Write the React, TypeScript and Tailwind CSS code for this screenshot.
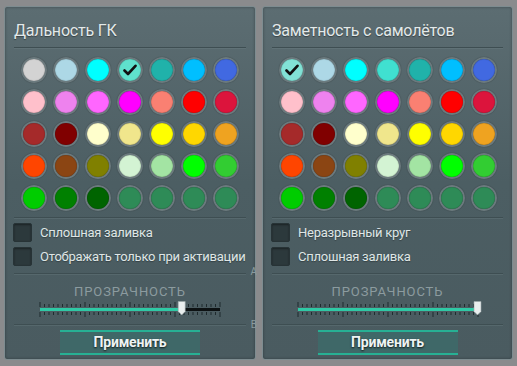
import React from "react";

const FONT = { fontFamily: "Roboto, 'Noto Sans', sans-serif" };

const COLORS = [
  ["#d3d3d3", "#add8e6", "#00ffff", "#40e0d0", "#20b2aa", "#00bfff", "#4169e1"],
  ["#ffc0cb", "#ee82ee", "#ff66ff", "#ff00ff", "#fa8072", "#ff0000", "#dc143c"],
  ["#a52a2a", "#800000", "#ffffcc", "#f0e68c", "#ffff00", "#ffd700", "#efa320"],
  ["#ff4500", "#8b4513", "#808000", "#d3f3d3", "#a3e4a3", "#00ff00", "#32cd32"],
  ["#00cc00", "#008000", "#006400", "#2e8b57", "#2e8b57", "#2e8b57", "#2e8b57"],
];

const Check = () => (
  <svg width="14" height="12" viewBox="0 0 14 12">
    <path d="M1.5 6.5 L5 10 L12.5 1.8" fill="none" stroke="#111" strokeWidth="2.6" strokeLinecap="round" strokeLinejoin="round" />
  </svg>
);

const Swatch = ({ color, selected }: { color: string; selected?: boolean }) => (
  <div className="w-[26px] h-[26px] rounded-full bg-[#6b7a7e] p-[2px] shadow-[0_0_1px_rgba(0,0,0,0.5)]">
    <div
      className="w-full h-full rounded-full flex items-center justify-center shadow-[inset_0_0_1px_rgba(0,0,0,0.6)]"
      style={{ backgroundColor: color }}
    >
      {selected && <Check />}
    </div>
  </div>
);

const Separator = () => <div className="mx-[9px] h-px bg-[#3e4e52] shadow-[0_1px_0_rgba(120,140,144,0.25)]" />;

const Checkbox = ({ label }: { label: string }) => (
  <div className="flex items-center gap-[8px] pl-[8px] h-[19px]">
    <div className="w-[19px] h-[19px] rounded-[2px] bg-[#2c393c] border border-[#273336] shadow-[inset_0_1px_2px_rgba(0,0,0,0.4)]" />
    <span className="text-[13px] text-[#dfe6e6] leading-none tracking-[-0.25px] [text-shadow:0_1px_1px_rgba(0,0,0,0.3)]">{label}</span>
  </div>
);

const Slider = ({ value }: { value: number }) => {
  const w = 180;
  const ticks = [];
  for (let i = 0; i <= 40; i++) {
    const x = 5 + (i * w) / 40;
    const major = i % 10 === 0;
    ticks.push(
      <g key={i}>
        <line x1={x} x2={x} y1={major ? 2 : 4} y2={7} stroke="#1f2b2e" strokeWidth="1" />
        <line x1={x} x2={x} y1={12} y2={major ? 17 : 15} stroke="#1f2b2e" strokeWidth="1" />
      </g>
    );
  }
  const hx = 5 + w * value;
  return (
    <div className="flex justify-center">
      <svg width={w + 10} height="20" viewBox={`0 0 ${w + 10} 20`}>
        {ticks}
        <rect x="5" y="8" width={w} height="3" fill="#0d1213" />
        <rect x="5" y="8" width={hx - 5} height="3" fill="#2fc9a5" />
        <path
          d={`M${hx - 4} 1.5 h7 v10 l-3.5 3.5 l-3.5 -3.5 z`}
          fill="#e9eeee"
          stroke="#9aa6a8"
          strokeWidth="0.6"
        />
      </svg>
    </div>
  );
};

const Panel = ({
  title,
  selected,
  options,
  value,
  widthClass,
  letters,
}: {
  title: string;
  selected: number;
  options: string[];
  value: number;
  widthClass: string;
  letters?: boolean;
}) => (
  <div
    className={`relative ${widthClass} h-[354px] rounded-[3px] border border-[#7d8c90] bg-gradient-to-b from-[#5c6d72] via-[#4c5e63] to-[#4a5b60] shadow-[inset_0_0_3px_rgba(0,0,0,0.35)] flex flex-col`}
  >
    <div className="h-[40px] pt-[13px] pl-[9px] text-[16px] leading-[22px] tracking-[-0.2px] text-[#e3e9e9] [text-shadow:0_1px_1px_rgba(0,0,0,0.4)]">
      {title}
    </div>
    <Separator />

    <div className="mt-[9px] flex flex-col items-center gap-[6px]">
      {COLORS.map((row, r) => (
        <div key={r} className="flex gap-[6px]">
          {row.map((c, i) => {
            const idx = r * 7 + i;
            const isSel = idx === selected;
            const color = isSel ? (idx === 0 ? "#82e2d6" : "#5fe1cc") : c;
            return <Swatch key={i} color={color} selected={isSel} />;
          })}
        </div>
      ))}
    </div>

    <div className="mt-[6px]">
      <Separator />
    </div>

    <div className="mt-[5px] flex flex-col gap-[5px]">
      {options.map((o) => (
        <Checkbox key={o} label={o} />
      ))}
    </div>

    <div className="mt-[7px]">
      <Separator />
    </div>

    <div className="mt-[10px] text-center text-[13px] leading-[16px] tracking-[0.9px] text-[#8c9b9f]">
      ПРОЗРАЧНОСТЬ
    </div>
    <Slider value={value} />

    <div className="mt-[4px]">
      <Separator />
    </div>

    <div className="mt-[5px] flex justify-center">
      <div className="w-[140px] h-[25px] flex items-center justify-center bg-[#3f6868] border-y-2 border-[#27b094] text-[14px] font-bold tracking-[-0.2px] text-[#eef3f3] [text-shadow:0_1px_2px_rgba(0,0,0,0.8)]">
        Применить
      </div>
    </div>

    {letters && (
      <>
        <div className="absolute right-[-2px] top-[260px] text-[10px] leading-none text-[#8a9a9e]">A</div>
        <div className="absolute right-[-2px] top-[313px] text-[10px] leading-none text-[#8a9a9e]">B</div>
      </>
    )}
  </div>
);

export default function App() {
  return (
    <div className="w-[517px] h-[366px] overflow-hidden bg-[#8a8b8d] pt-[6px] pl-[4px] flex gap-[6px]" style={FONT}>
      <Panel
        title="Дальность ГК"
        selected={3}
        options={["Сплошная заливка", "Отображать только при активации"]}
        value={0.79}
        widthClass="w-[252px]"
        letters
      />
      <Panel
        title="Заметность с самолётов"
        selected={0}
        options={["Неразрывный круг", "Сплошная заливка"]}
        value={1}
        widthClass="w-[251px]"
      />
    </div>
  );
}
